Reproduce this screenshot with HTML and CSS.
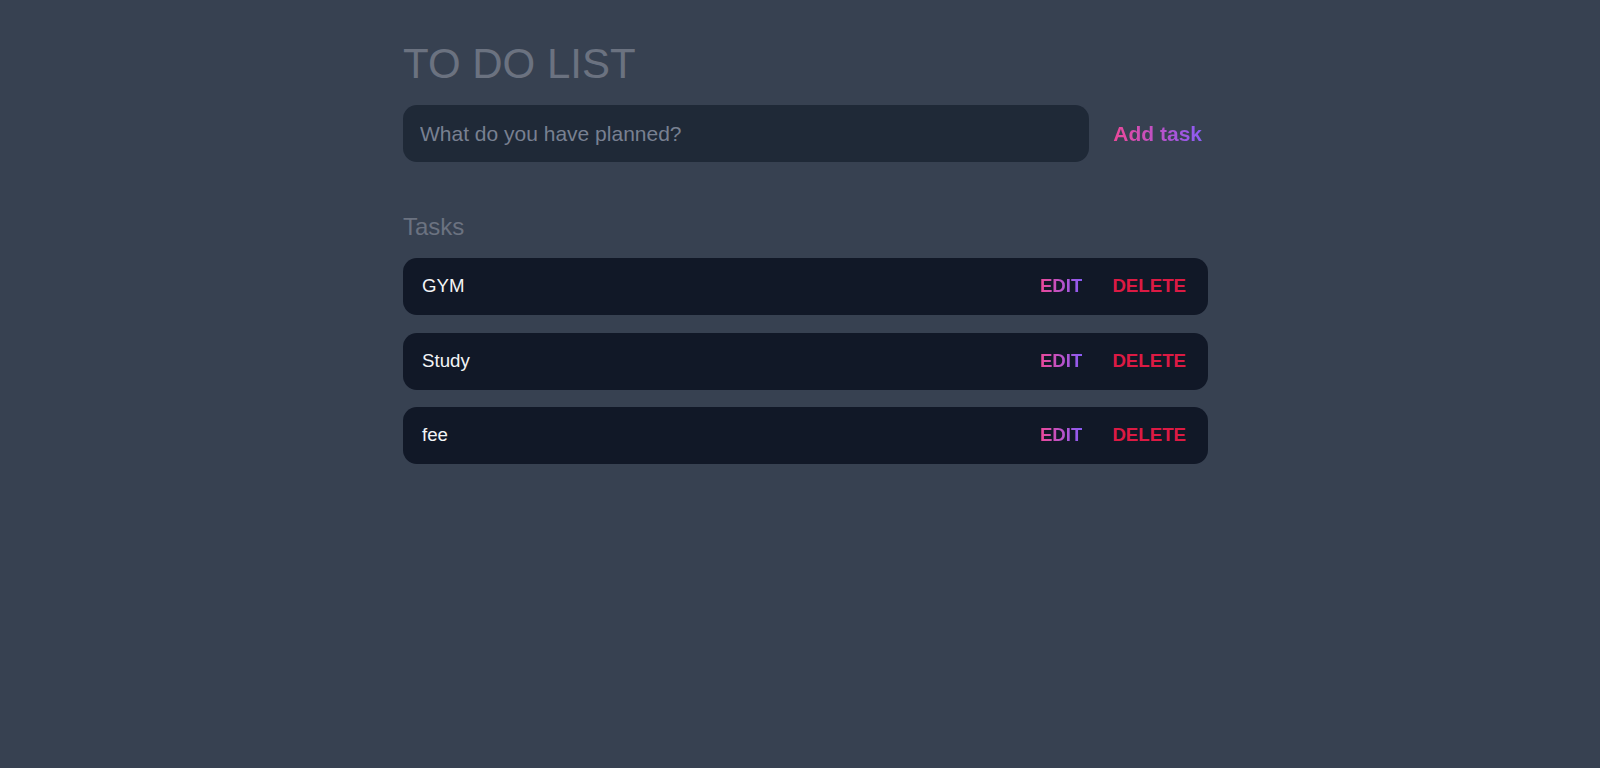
FILE: index.html
```html
<!DOCTYPE html>
<html lang="en">
<head>
<meta charset="utf-8">
<title>To Do List</title>
<link rel="stylesheet" href="styles.css">
</head>
<body>
<main class="app">
  <h1 class="title">TO DO LIST</h1>
  <form class="new-task">
    <input class="new-task-input" type="text" placeholder="What do you have planned?">
    <button class="add-btn" type="button"><span class="grad">Add task</span></button>
  </form>
  <section class="tasks">
    <h2 class="tasks-title">Tasks</h2>
    <div class="task-list">
      <div class="task">
        <span class="task-text">GYM</span>
        <div class="actions"><button class="act edit"><span class="grad">EDIT</span></button><button class="act delete">DELETE</button></div>
      </div>
      <div class="task">
        <span class="task-text">Study</span>
        <div class="actions"><button class="act edit"><span class="grad">EDIT</span></button><button class="act delete">DELETE</button></div>
      </div>
      <div class="task">
        <span class="task-text">fee</span>
        <div class="actions"><button class="act edit"><span class="grad">EDIT</span></button><button class="act delete">DELETE</button></div>
      </div>
    </div>
  </section>
</main>
</body>
</html>
```
FILE: styles.css
```css
html, body {
  margin: 0;
  padding: 0;
}
body {
  background: #374151;
  font-family: "Liberation Sans", Arial, sans-serif;
  min-height: 100vh;
}
.app {
  width: 805px;
  margin-left: calc(50% - 397px);
  padding-top: 43px;
}
.title {
  margin: 0;
  font-size: 42px;
  line-height: 1;
  font-weight: 400;
  color: #6b7280;
}
.new-task {
  margin: 20px 0 0;
  display: flex;
  align-items: center;
  gap: 24px;
}
.new-task-input {
  flex: 1;
  height: 57px;
  box-sizing: border-box;
  padding: 0 17px;
  border: none;
  outline: none;
  border-radius: 14px;
  background: #1f2937;
  color: #f3f4f6;
  font-family: "Liberation Sans", Arial, sans-serif;
  font-size: 21px;
}
.new-task-input::placeholder {
  color: #788091;
}
.add-btn {
  background: none;
  border: none;
  padding: 0 6px 0 0;
  font-family: "Liberation Sans", Arial, sans-serif;
  font-size: 21px;
  font-weight: 700;
  cursor: pointer;
}
.grad {
  background: linear-gradient(to right, #ec4899, #8b5cf6);
  -webkit-background-clip: text;
  background-clip: text;
  color: transparent;
}
.tasks {
  margin-top: 53px;
}
.tasks-title {
  margin: 0;
  font-size: 24px;
  line-height: 1;
  font-weight: 400;
  color: #6b7280;
}
.task-list {
  margin-top: 19px;
  display: flex;
  flex-direction: column;
  gap: 17.5px;
}
.task {
  height: 57px;
  box-sizing: border-box;
  padding: 0 22px 1px 19px;
  border-radius: 14px;
  background: #111827;
  display: flex;
  align-items: center;
  justify-content: space-between;
}
.task-text {
  color: #f3f4f6;
  font-size: 18.67px;
}
.actions {
  display: flex;
  gap: 30px;
}
.act {
  background: none;
  border: none;
  padding: 0;
  font-family: "Liberation Sans", Arial, sans-serif;
  font-size: 18.67px;
  font-weight: 700;
  cursor: pointer;
}
.delete {
  color: #dc1a44;
}
```
